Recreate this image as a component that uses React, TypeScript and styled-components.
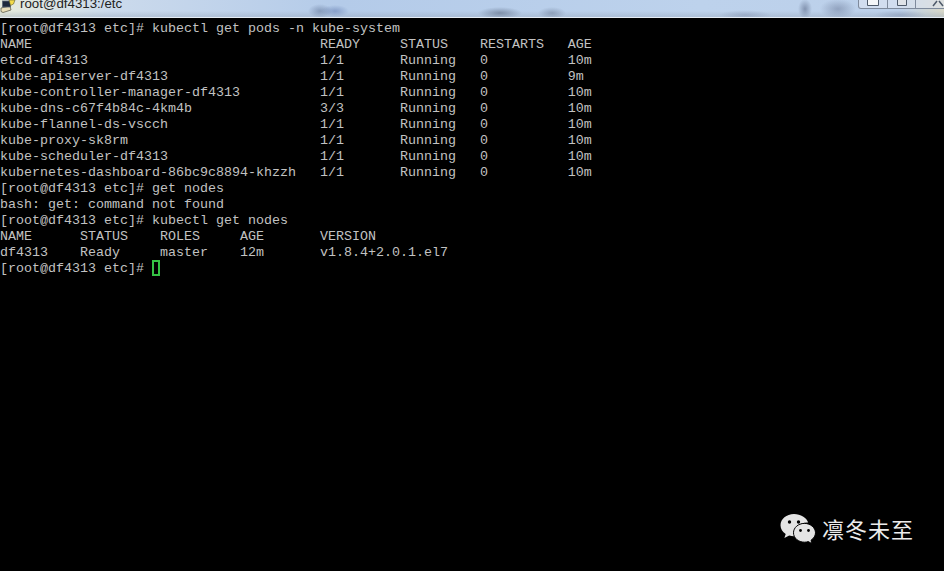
import React from "react";
import styled, { createGlobalStyle } from "styled-components";

const Global = createGlobalStyle`
  html, body { margin: 0; padding: 0; background: #000; }
  #root { width: 944px; height: 571px; overflow: hidden; }
`;

const Window = styled.div`
  position: relative;
  width: 944px;
  height: 571px;
  background: #000;
  overflow: hidden;
  display: flex;
  flex-direction: column;
`;

const TitleBar = styled.header`
  flex: none;
  height: 17px;
  display: flex;
  align-items: flex-start;
  overflow: hidden;
  border-bottom: 1px solid #e6edf5;
  background:
    radial-gradient(ellipse 12px 7px at 320px 11px, rgba(95,115,150,.55), transparent),
    radial-gradient(ellipse 14px 6px at 335px 11px, rgba(90,115,170,.5), transparent),
    radial-gradient(ellipse 22px 6px at 500px 13px, rgba(90,105,130,.6), transparent),
    radial-gradient(ellipse 14px 6px at 552px 13px, rgba(95,110,135,.45), transparent),
    radial-gradient(ellipse 7px 10px at 805px 9px, rgba(100,115,145,.65), transparent),
    radial-gradient(ellipse 18px 10px at 838px 9px, rgba(110,125,155,.55), transparent),
    radial-gradient(ellipse 26px 5px at 745px 15px, rgba(120,135,165,.4), transparent),
    radial-gradient(ellipse 26px 5px at 900px 15px, rgba(120,135,165,.4), transparent),
    linear-gradient(180deg, transparent 0, transparent 11px, rgba(150,165,185,.35) 16px),
    linear-gradient(90deg, #e6ebdc 0, #cbdaec 110px, #b4cbe9 340px, #bdd2ec 700px, #bcd0ea 900px, #d8d8c8 944px);
`;

const AppIcon = styled.svg`
  flex: none;
  width: 16px;
  height: 17px;
  margin-right: 4px;
`;

const Title = styled.span`
  font: 13.3px/8px "Liberation Sans", Arial, sans-serif;
  color: #222;
`;

const Controls = styled.div`
  margin-left: auto;
  flex: none;
  margin-right: -16px;
  display: flex;
  height: 8px;
  border: 1px solid #7e8a9c;
  border-top: 0;
  border-radius: 0 0 3px 3px;
  background: rgba(225, 232, 242, .55);
`;

const Control = styled.div<{ $wide?: boolean }>`
  box-sizing: border-box;
  width: ${(p) => (p.$wide ? "44px" : "28px")};
  height: 100%;
  display: flex;
  justify-content: center;
  & + & { border-left: 1px solid #7e8a9c; }
`;

const Screen = styled.main`
  flex: 1;
  padding-top: 3px;
  min-height: 0;
`;

const Line = styled.pre`
  margin: 0;
  height: 16px;
  font: 13.333px/16px "Liberation Mono", "Courier New", monospace;
  color: #c2c2c2;
  white-space: pre;
  display: flex;
  align-items: center;
`;

const Cursor = styled.span`
  flex: none;
  box-sizing: border-box;
  width: 8px;
  height: 16px;
  margin-bottom: 2px;
  border: 2px solid #35c244;
`;

const Watermark = styled.div`
  position: absolute;
  left: 780px;
  top: 511px;
  display: flex;
  align-items: center;
  gap: 6px;
`;

const MarkText = styled.span`
  font: 22px/34px "Noto Sans CJK SC", sans-serif;
  letter-spacing: 1px;
  color: #ececec;
  padding-bottom: 3px;
`;

const lines = [
  "[root@df4313 etc]# kubectl get pods -n kube-system",
  "NAME                                    READY     STATUS    RESTARTS   AGE",
  "etcd-df4313                             1/1       Running   0          10m",
  "kube-apiserver-df4313                   1/1       Running   0          9m",
  "kube-controller-manager-df4313          1/1       Running   0          10m",
  "kube-dns-c67f4b84c-4km4b                3/3       Running   0          10m",
  "kube-flannel-ds-vscch                   1/1       Running   0          10m",
  "kube-proxy-sk8rm                        1/1       Running   0          10m",
  "kube-scheduler-df4313                   1/1       Running   0          10m",
  "kubernetes-dashboard-86bc9c8894-khzzh   1/1       Running   0          10m",
  "[root@df4313 etc]# get nodes",
  "bash: get: command not found",
  "[root@df4313 etc]# kubectl get nodes",
  "NAME      STATUS    ROLES     AGE       VERSION",
  "df4313    Ready     master    12m       v1.8.4+2.0.1.el7",
];

export default function App() {
  return (
    <Window>
      <Global />
      <TitleBar>
        <AppIcon viewBox="0 0 16 17">
          <path d="M1 8l9-2 1 4-8 2.500-2-1z" fill="#e9dfb8" stroke="#4a4a3c" strokeWidth=".7" />
          <rect x="2.500" y="1" width="8" height="6" fill="#1e2a3c" stroke="#5b6674" strokeWidth=".8" />
          <path d="M9 0h6l-1.500 4-3 1.500z" fill="#f3dc4a" stroke="#5a5a30" strokeWidth=".6" />
        </AppIcon>
        <Title>root@df4313:/etc</Title>
        <Controls>
          <Control>
            <svg width="12" height="7"><path d="M0.5 0v5.500h11V0" fill="#f4f6f8" stroke="#4e5a6a" /></svg>
          </Control>
          <Control>
            <svg width="12" height="7"><path d="M1.500 0v5.500h9V0" fill="#dfe3e8" stroke="#4e5a6a" /></svg>
          </Control>
          <Control $wide>
            <svg width="12" height="7"><path d="M1 6l4-5M11 6L7 1" stroke="#4e5a6a" strokeWidth="1.500" fill="none" /></svg>
          </Control>
        </Controls>
      </TitleBar>
      <Screen>
        {lines.map((l, i) => (
          <Line key={i}>{l}</Line>
        ))}
        <Line>
          {"[root@df4313 etc]# "}
          <Cursor />
        </Line>
      </Screen>
      <Watermark>
        <svg width="36" height="34" viewBox="0 0 36 34">
          <path d="M14 1C6.500 1 .5 6 .5 12.200c0 3.600 2 6.600 5.200 8.700L4.400 25l4.800-2.500c1.500.4 3 .7 4.800.7.500 0 1 0 1.500-.1-.3-1-.5-2-.5-3.100 0-6 5.500-10.600 12.200-10.600h1C26.500 4.600 20.800 1 14 1z" fill="#e4e4e4" />
          <path d="M35.500 19.800c0-5.200-5.200-9.400-11-9.400-6.200 0-11 4.200-11 9.400s4.800 9.400 11 9.400c1.300 0 2.600-.2 3.800-.6l3.700 2.100-1-3.400c2.700-2 4.500-4.500 4.500-7.500z" fill="#e4e4e4" stroke="#000" strokeWidth="1" />
          <circle cx="9.500" cy="9" r="1.700" fill="#000" />
          <circle cx="18.500" cy="9" r="1.700" fill="#000" />
          <circle cx="20.500" cy="17.500" r="1.400" fill="#000" />
          <circle cx="28.500" cy="17.500" r="1.400" fill="#000" />
        </svg>
        <MarkText>凛冬未至</MarkText>
      </Watermark>
    </Window>
  );
}
